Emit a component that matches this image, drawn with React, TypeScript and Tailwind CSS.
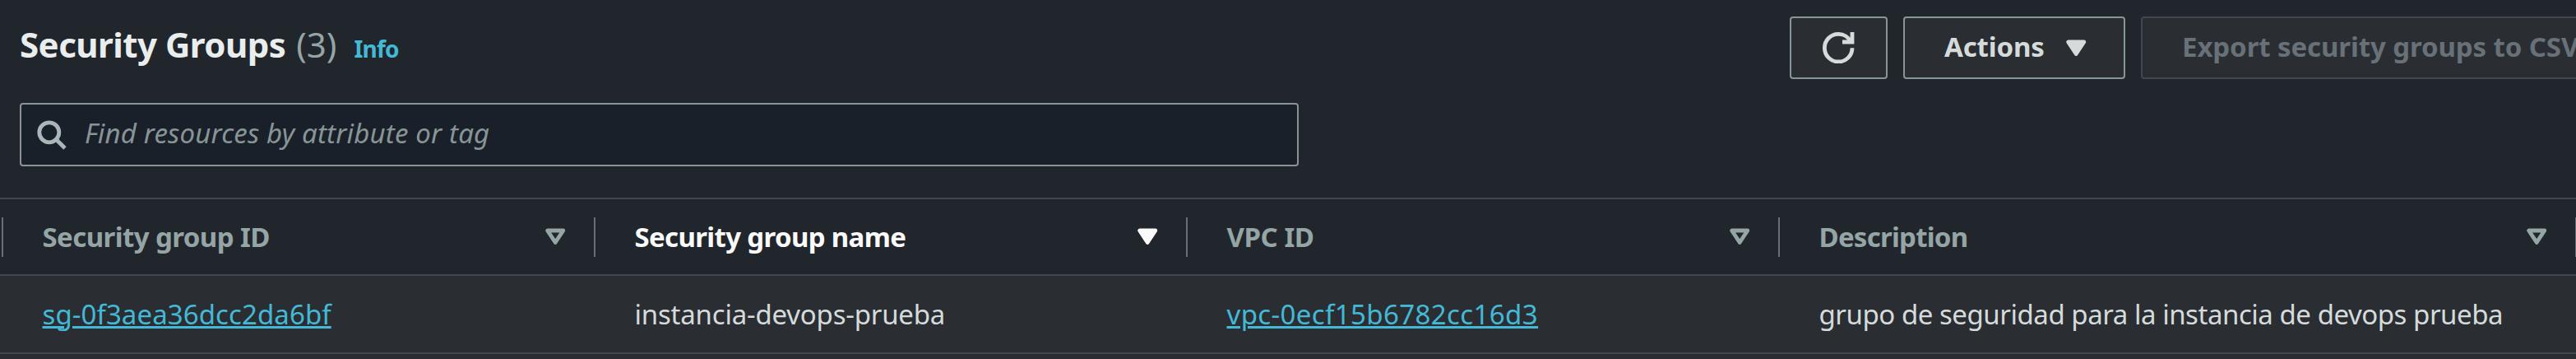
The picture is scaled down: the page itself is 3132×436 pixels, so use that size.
import React from 'react';

type SortState = 'none' | 'descending';

interface Column {
  label: string;
  sort: SortState;
  labelClass: string;
  value: string;
  valueClass: string;
  link?: boolean;
}

const columns: Column[] = [
  {
    label: 'Security group ID',
    sort: 'none',
    labelClass: 'tracking-[-0.58px] text-[#95a5a6]',
    value: 'sg-0f3aea36dcc2da6bf',
    valueClass: 'tracking-[0.09px]',
    link: true,
  },
  {
    label: 'Security group name',
    sort: 'descending',
    labelClass: 'tracking-[-0.66px] text-[#fafafa]',
    value: 'instancia-devops-prueba',
    valueClass: 'tracking-[-0.21px]',
  },
  {
    label: 'VPC ID',
    sort: 'none',
    labelClass: 'tracking-[-0.45px] text-[#95a5a6]',
    value: 'vpc-0ecf15b6782cc16d3',
    valueClass: 'tracking-[0.39px]',
    link: true,
  },
  {
    label: 'Description',
    sort: 'none',
    labelClass: 'tracking-[-0.75px] text-[#95a5a6]',
    value: 'grupo de seguridad para la instancia de devops prueba',
    valueClass: 'tracking-[-0.46px]',
  },
];

function CaretIcon({ filled, className }: { filled: boolean; className?: string }) {
  return (
    <svg viewBox="0 0 16 16" className={`size-[38.4px] shrink-0 ${className ?? ''}`} stroke="currentColor" strokeWidth="2" strokeLinejoin="round" fill={filled ? 'currentColor' : 'none'}>
      <path d="M4 5h8l-4 6-4-6z" />
    </svg>
  );
}

function RefreshIcon() {
  return (
    <svg viewBox="0 0 16 16" className="size-[38.4px]" stroke="currentColor" strokeWidth="2" fill="none">
      <path d="M10 5h5V0" />
      <path d="M15 8a6.957 6.957 0 0 1-7 7 6.957 6.957 0 0 1-7-7 6.957 6.957 0 0 1 7-7 6.87 6.87 0 0 1 6.3 4" />
    </svg>
  );
}

function SearchIcon() {
  return (
    <svg viewBox="0 0 16 16" className="size-[38.4px] shrink-0 text-[#aab7b8]" stroke="currentColor" strokeWidth="2" fill="none">
      <circle cx="7" cy="7" r="5" />
      <path d="m15 15-4.5-4.5" />
    </svg>
  );
}

const buttonBase = 'flex h-[76px] shrink-0 items-center rounded-[4px] border-2 bg-[#2a2e33] font-bold whitespace-nowrap';

export default function App() {
  return (
    <div className="h-[436px] w-[3132px] overflow-hidden bg-[#21252c] font-['Noto_Sans','Open_Sans',sans-serif] text-[33px] leading-[44px] text-[#d5dbdb]">
      <header className="flex h-[125px] items-start justify-between pt-[20px] pl-[24px]">
        <h2 className="flex items-baseline pt-[6px] text-[42px] leading-[56px] whitespace-nowrap">
          <span className="font-bold tracking-[-0.53px] text-[#eaeded]">Security Groups</span>
          <span className="ml-[13px] text-[#95a5a6]">(3)</span>
          <a className="ml-[21px] text-[28px] font-bold tracking-[-0.8px] text-[#44b9d6]">Info</a>
        </h2>
        <div className="flex w-[956px] gap-[19px] overflow-hidden">
          <button className={`${buttonBase} w-[119px] justify-center border-[#879596]`}>
            <RefreshIcon />
          </button>
          <button className={`${buttonBase} w-[270px] border-[#879596] pl-[48px]`}>
            <span className="w-[141px] pb-[3px] text-left tracking-[-0.15px]">Actions</span>
            <CaretIcon filled />
          </button>
          <button className={`${buttonBase} border-[#414750] px-[48px] text-[#687078]`}>
            <span className="pb-[3px] tracking-[-0.1px]">Export security groups to CSV</span>
          </button>
        </div>
      </header>

      <div className="ml-[24px] flex h-[77px] w-[1555px] items-center rounded-[4px] border-2 border-[#879596] bg-[#1a2029] pl-[17px]">
        <SearchIcon />
        <span className="ml-[21.5px] pb-[3px] tracking-[0.17px] text-[#879596] italic">Find resources by attribute or tag</span>
      </div>

      <div className="mt-[38px]">
        <div className="grid h-[95px] grid-cols-[720px_720px_720px_969px_1px] items-center border-y-2 border-[#414750] pl-[2px]">
          {columns.map((c) => (
            <div key={c.label} className="flex h-[48px] items-center justify-between border-l-2 border-[#687078] pr-[27.5px] pl-[47.5px]">
              <span className={`font-bold whitespace-nowrap ${c.labelClass}`}>{c.label}</span>
              <CaretIcon filled={c.sort === 'descending'} className={c.sort === 'descending' ? 'text-[#fafafa]' : 'text-[#95a5a6]'} />
            </div>
          ))}
          <div className="h-[48px] bg-[#687078]" />
        </div>
        <div className="grid h-[95px] grid-cols-[720px_720px_720px_970px] items-center border-b-2 border-[#414750] bg-[#2a2e33] pl-[2px]">
          {columns.map((c) => (
            <div key={c.label} className="pl-[49.5px] whitespace-nowrap">
              {c.link ? (
                <a className={`text-[#44b9d6] underline decoration-[3px] underline-offset-[2px] ${c.valueClass}`}>{c.value}</a>
              ) : (
                <span className={c.valueClass}>{c.value}</span>
              )}
            </div>
          ))}
        </div>
        <div className="h-[6px] bg-[#2a2e33]" />
      </div>
    </div>
  );
}
